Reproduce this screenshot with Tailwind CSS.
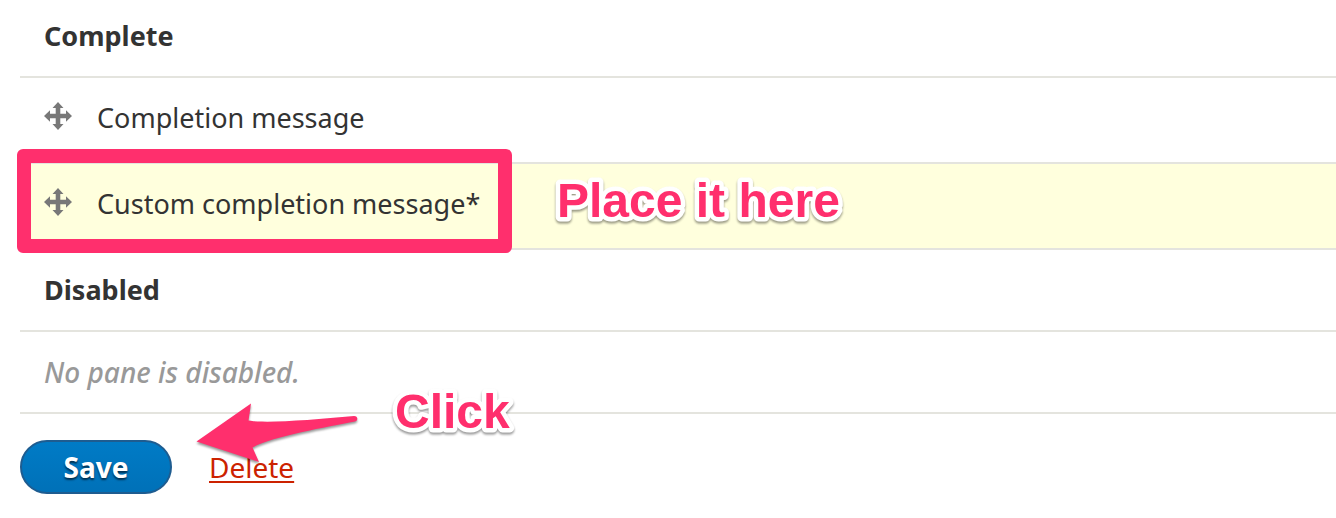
<!DOCTYPE html>
<html lang="en">
<head>
<meta charset="utf-8">
<meta name="viewport" content="width=device-width, initial-scale=1">
<title>Checkout panes</title>
<script src="https://cdn.jsdelivr.net/npm/@tailwindcss/browser@4"></script>
</head>
<body class="bg-white text-[#333333] font-['Noto_Sans','Open_Sans',sans-serif] text-[27px] leading-9 overflow-x-hidden">
<svg class="hidden" aria-hidden="true">
  <symbol id="move" viewBox="0 0 28 28">
    <path fill="#787878" d="M14 0 19.500 6H16.300v5.700H22V8.300L28 14 22 19.700V16.300h-5.700V22h3.200L14 28 8.500 22H11.700v-5.700H6v3.400L0 14 6 8.300v3.400h5.700V6H8.500Z"/>
  </symbol>
</svg>
<main class="relative pl-5">
  <table class="w-full border-collapse text-left">
    <tbody>
      <tr class="h-[77px] border-b-2 border-[#e4e4de]"><th scope="rowgroup" class="pl-6 pb-1 font-bold">Complete</th></tr>
      <tr class="h-[86px] border-b-2 border-[#e4e4de]">
        <td class="pl-6 pb-1"><div class="flex items-center gap-[25px]"><svg class="size-7 mb-1" role="img" aria-label="Move pane"><use href="#move"/></svg><span>Completion message</span></div></td>
      </tr>
      <tr class="h-[86px] border-b-2 border-[#e4e4de] bg-[#ffffdd]">
        <td class="pl-6 pb-1"><div class="flex items-center gap-[25px]"><svg class="size-7 mb-1" role="img" aria-label="Move pane"><use href="#move"/></svg><span>Custom completion message*</span></div></td>
      </tr>
    </tbody>
    <tbody>
      <tr class="h-[82px] border-b-2 border-[#e4e4de]"><th scope="rowgroup" class="pl-6 font-bold">Disabled</th></tr>
      <tr class="h-[82px] border-b-2 border-[#e4e4de]"><td class="pl-6 text-[28px] font-medium italic text-[#999999]">No pane is disabled.</td></tr>
    </tbody>
  </table>
  <div class="flex items-center gap-[37px] pt-[26px] text-[28px]">
    <button type="button" class="h-[54px] w-[152px] rounded-full border-2 border-[#1e5c90] bg-linear-to-b from-[#007bc6] to-[#0071b8] font-bold text-white [text-shadow:0_2px_2px_#003050]">Save</button>
    <a href="#delete" class="text-[#cc2200] underline decoration-2 underline-offset-3">Delete</a>
  </div>

  <!-- Tutorial annotations over the form -->
  <div class="absolute left-[17px] top-[149px] h-[104px] w-[495px] rounded-md border-14 border-[#ff2f6d] pointer-events-none"></div>
  <svg class="absolute left-[550px] top-[170px] h-[60px] w-[300px] overflow-visible pointer-events-none drop-shadow-[0_2px_1px_#00000066]">
    <text x="7" y="47" class="font-['Liberation_Sans',Arial,sans-serif] text-5xl font-bold fill-[#ff2f6d] stroke-white stroke-[9px] [stroke-linejoin:round] [paint-order:stroke_fill]">Place it here</text>
  </svg>
  <svg class="absolute left-[388px] top-[381px] h-[60px] w-[132px] overflow-visible pointer-events-none drop-shadow-[0_2px_1px_#00000066]">
    <text x="7" y="47" class="font-['Liberation_Sans',Arial,sans-serif] text-5xl font-bold fill-[#ff2f6d] stroke-white stroke-[9px] [stroke-linejoin:round] [paint-order:stroke_fill]">Click</text>
  </svg>
  <svg class="absolute left-[190px] top-[398px] h-[72px] w-[176px] overflow-visible pointer-events-none drop-shadow-[0_2px_1px_#00000066]" viewBox="190 398 176 72" aria-hidden="true">
    <path fill="#ff2f6d" d="M196.500 441.500 251 403.500 248.500 420.500C265 423.500 312 420 354 416C358 416 358.500 420.500 355 421.500C327 427 274 436 252.500 447.500L259 462Z"/>
  </svg>
</main>
</body>
</html>
